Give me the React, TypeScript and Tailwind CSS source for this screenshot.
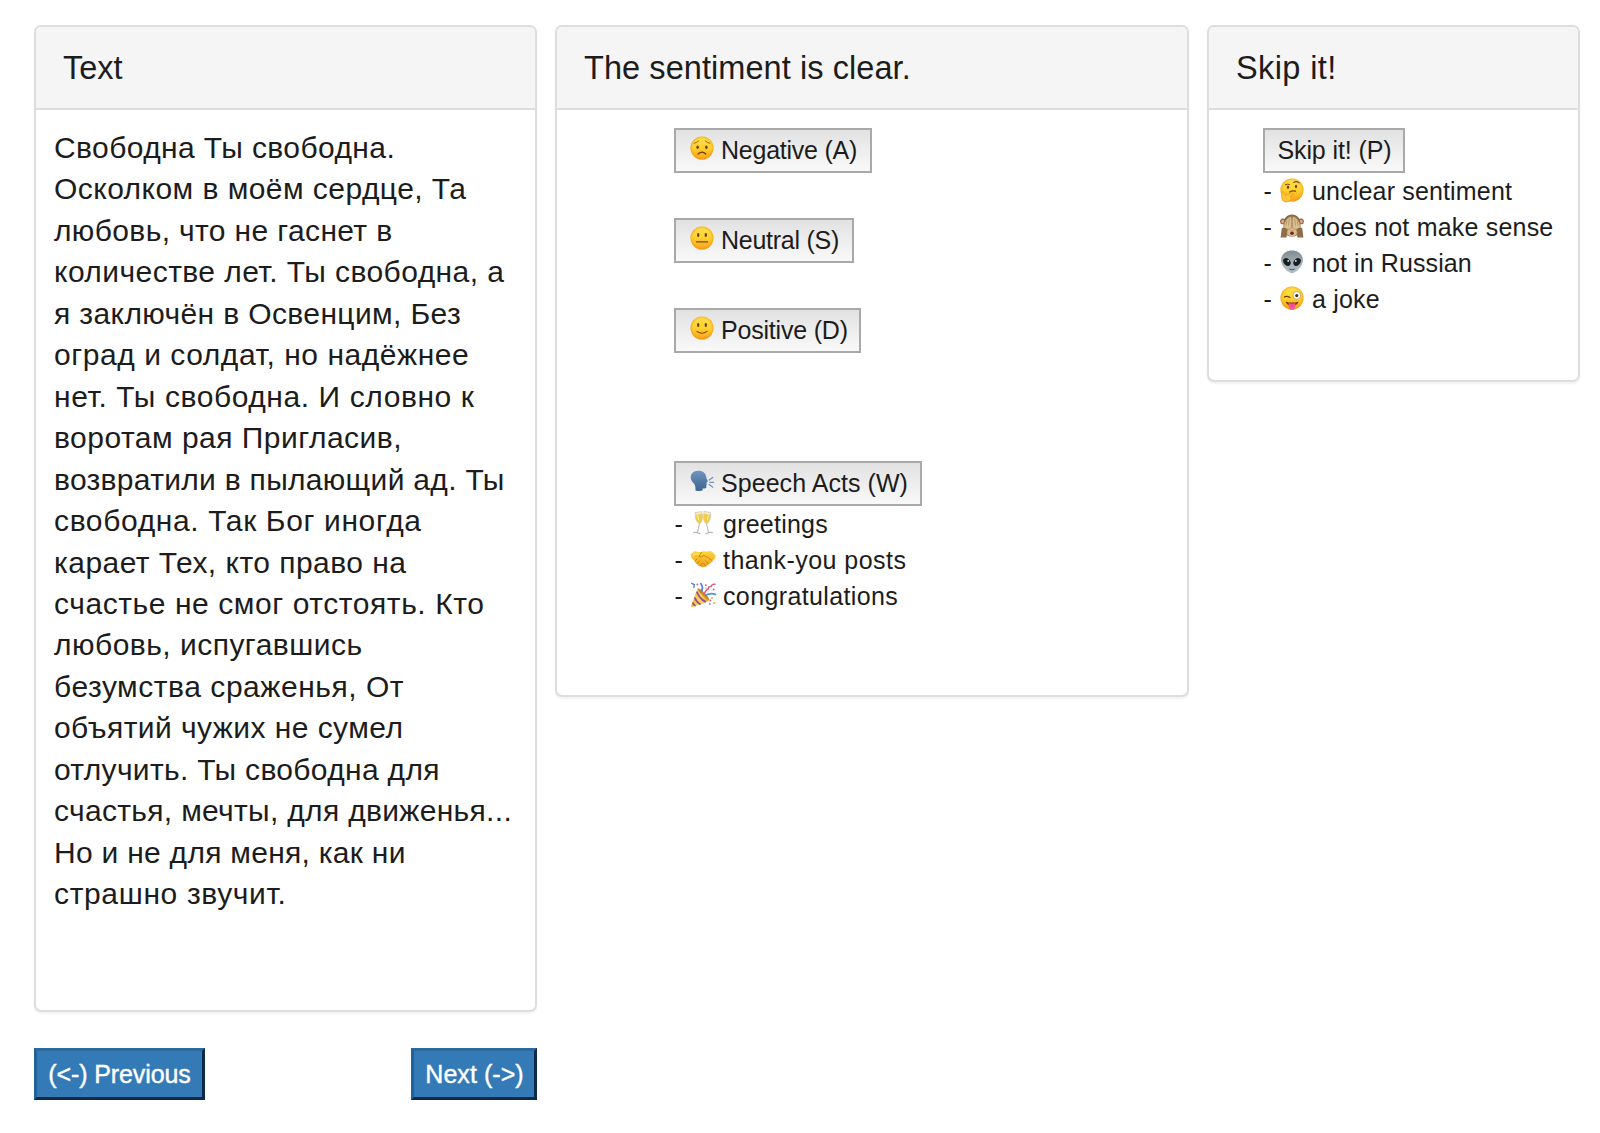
import type { ReactNode } from 'react';

/* ---------- emoji drawings ---------- */

function EmojiSvg({ children, className = '' }: { children: ReactNode; className?: string }) {
  return (
    <svg viewBox="0 0 24 24" className={`h-6 w-6 shrink-0 overflow-visible ${className}`} aria-hidden="true">
      {children}
    </svg>
  );
}

function Gradients() {
  return (
    <svg className="absolute h-0 w-0" aria-hidden="true">
      <defs>
        <linearGradient id="face" x1="0" y1="0" x2="0" y2="1">
          <stop offset="0" stopColor="#fee14c" />
          <stop offset="0.5" stopColor="#ffd02f" />
          <stop offset="1" stopColor="#f9a11b" />
        </linearGradient>
        <radialGradient id="rim" cx="0.5" cy="0.5" r="0.5">
          <stop offset="0.78" stopColor="#f59b12" stopOpacity="0" />
          <stop offset="1" stopColor="#ee8a0c" stopOpacity="0.55" />
        </radialGradient>
        <linearGradient id="speaker" x1="0" y1="0" x2="0" y2="1">
          <stop offset="0" stopColor="#6d95c0" />
          <stop offset="1" stopColor="#3e648f" />
        </linearGradient>
        <linearGradient id="alien" x1="0" y1="0" x2="0" y2="1">
          <stop offset="0" stopColor="#7e8b90" />
          <stop offset="0.5" stopColor="#9fadb3" />
          <stop offset="1" stopColor="#b4c3ca" />
        </linearGradient>
        <linearGradient id="hands" x1="0" y1="0" x2="0" y2="1">
          <stop offset="0" stopColor="#ffd53c" />
          <stop offset="1" stopColor="#f0a01a" />
        </linearGradient>
        <linearGradient id="cone" x1="0" y1="0" x2="1" y2="0">
          <stop offset="0" stopColor="#f3b62c" />
          <stop offset="0.5" stopColor="#ffd95a" />
          <stop offset="1" stopColor="#e99a1c" />
        </linearGradient>
      </defs>
    </svg>
  );
}

function Face() {
  return (
    <>
      <circle cx="12" cy="12" r="11.5" fill="url(#face)" />
      <circle cx="12" cy="12" r="11.5" fill="url(#rim)" />
    </>
  );
}

function Worried() {
  return (
    <EmojiSvg>
      <Face />
      <g fill="none" stroke="#8a5a12" strokeLinecap="round">
        <path d="M4.2 7.3 Q6.4 6.9 8.6 5" strokeWidth="0.9" />
        <path d="M19.8 7.3 Q17.6 6.9 15.4 5" strokeWidth="0.9" />
        <path d="M8.2 18 Q12 14.2 15.8 18" stroke="#6a3d0c" strokeWidth="1.3" />
      </g>
      <ellipse cx="7.6" cy="11.2" rx="1.25" ry="1.7" fill="#6a3d0c" />
      <ellipse cx="16.4" cy="11.2" rx="1.25" ry="1.7" fill="#6a3d0c" />
    </EmojiSvg>
  );
}

function NeutralFace() {
  return (
    <EmojiSvg>
      <Face />
      <ellipse cx="8.2" cy="9" rx="1.2" ry="1.9" fill="#6a3d0c" />
      <ellipse cx="15.8" cy="9" rx="1.2" ry="1.9" fill="#6a3d0c" />
      <path d="M6.4 15.8 H17.6" stroke="#7a4a0e" strokeWidth="1.2" strokeLinecap="round" />
    </EmojiSvg>
  );
}

function Smile() {
  return (
    <EmojiSvg>
      <Face />
      <ellipse cx="8.2" cy="9" rx="1.2" ry="1.9" fill="#6a3d0c" />
      <ellipse cx="15.8" cy="9" rx="1.2" ry="1.9" fill="#6a3d0c" />
      <path d="M7 15.4 Q12 19 17 15.4" fill="none" stroke="#7a4a0e" strokeWidth="1.1" strokeLinecap="round" />
    </EmojiSvg>
  );
}

function SpeakingHead() {
  return (
    <EmojiSvg>
      <path
        d="M8.4 1.8 C3.6 1.8 0.6 4.7 0.7 8.6 C0.8 11.3 2.3 12.9 4.2 14.9 C5.2 16 5.6 18 5.5 21.4 Q8.8 22.6 12.6 21.6 L12.7 19.3 Q15.4 19.8 16.2 18.8 C16.7 17.9 16 16.8 16.5 15.9 C17 15.1 16.5 14.3 16.6 13.4 L17.8 12.5 C18.2 11.9 16.5 9.9 16.2 8.3 C15.9 4.4 13 1.8 8.4 1.8 Z"
        fill="url(#speaker)"
      />
      <g stroke="#6f93b5" strokeWidth="1.2" strokeLinecap="round">
        <path d="M19.2 11 L22.8 8.4" />
        <path d="M19.8 13.3 H23.6" />
        <path d="M19.2 15.6 L22.8 18.2" />
      </g>
    </EmojiSvg>
  );
}

function Glasses() {
  return (
    <EmojiSvg>
      <g strokeLinejoin="round" strokeLinecap="round">
        <path d="M4.4 1.6 L10.8 0.4 C12 5.8 11.6 10.8 8.8 12.8 C5.4 12.2 3.8 7 4.4 1.6 Z" fill="#f1ebcd" stroke="#cdc8b0" strokeWidth="0.7" />
        <path d="M4.5 4 L11.3 2.8 C11.8 7.4 11.2 11 8.8 12.4 C6 11.8 4.4 8 4.5 4 Z" fill="#f0cb4c" />
        <path d="M13.2 0.4 L19.6 1.6 C20.2 7 18.6 12.2 15.2 12.8 C12.4 10.8 12 5.8 13.2 0.4 Z" fill="#f1ebcd" stroke="#cdc8b0" strokeWidth="0.7" />
        <path d="M12.7 2.8 L19.5 4 C19.6 8 18 11.8 15.2 12.4 C12.8 11 12.2 7.4 12.7 2.8 Z" fill="#f0cb4c" />
        <path d="M8.5 12.8 L6.4 21.6 M15.5 12.8 L17.6 21.6" stroke="#bdbcb6" strokeWidth="1.1" fill="none" />
        <path d="M2.6 21.6 Q6 20.6 9 22.8 M21.4 21.6 Q18 20.6 15 22.8" stroke="#b6b5ae" strokeWidth="1.2" fill="none" />
      </g>
      <path d="M6.7 4.6 L7.6 9 M17.3 4.6 L16.4 9" stroke="#fff5bd" strokeWidth="1" />
    </EmojiSvg>
  );
}

function Handshake() {
  return (
    <EmojiSvg>
      <path
        d="M-0.6 7.6 L3.6 4 Q7 5.2 10 4.9 Q13 3.6 15.6 4.6 L20.2 4 L24.8 8.6 Q24.4 12.2 21.4 13.8 Q20.4 16.6 17.4 17.6 Q15.6 20 12.8 20 Q10.4 20.8 9.2 19 Q6.6 19.2 6 17 Q3.8 16.6 3.8 14 Q0.2 11.8 -0.6 7.6 Z"
        fill="url(#hands)"
      />
      <g fill="none" stroke="#c87a12" strokeWidth="0.85" strokeLinecap="round">
        <path d="M11 5.2 Q8.4 7 7.8 9.6 Q9.8 11 12.8 8.4 Q17.4 10.2 21.2 13.8" />
        <path d="M4 13.8 L6 12 M6.2 16.6 L8.4 14 M9.2 18.8 L11 16.4" />
        <path d="M14.8 13.8 L17.6 17 M12.4 16 L14.6 19" />
      </g>
      <path d="M2 8 Q5 6.4 8 7" stroke="#ffe984" strokeWidth="1" fill="none" strokeLinecap="round" />
    </EmojiSvg>
  );
}

function Party() {
  return (
    <EmojiSvg>
      <path d="M6.6 5.2 L18.4 17 Q15.4 20 1 24 Q-0.4 24.2 0.2 22.6 Z" fill="url(#cone)" />
      <g stroke="#8c4ba6" strokeWidth="1.7" fill="none">
        <path d="M5.8 8.6 Q8.4 15.8 14.8 19" />
        <path d="M3.7 14.4 Q5.2 18.9 9.6 21.4" />
        <path d="M1.6 19.6 Q2.6 22 4.6 23" />
      </g>
      <ellipse cx="12.5" cy="11.1" rx="1.7" ry="8" transform="rotate(-45 12.5 11.1)" fill="#d08c24" />
      <g fill="none" strokeLinecap="round">
        <path d="M0.6 0.4 L3.4 1.6 L2.8 4.4" stroke="#4a7fe0" strokeWidth="1.4" />
        <path d="M10.2 8.6 Q12.8 4.8 9.8 0.6" stroke="#4a7fe0" strokeWidth="1.7" />
        <path d="M13 11 Q15.2 6.6 17.2 6 Q17.4 3 20.2 3.4 Q21 0.6 24.2 1.2" stroke="#e8577c" strokeWidth="1.4" />
        <path d="M14.4 12.4 Q19 9.4 24.4 11.4" stroke="#4f93e8" strokeWidth="1.8" />
      </g>
      <g fill="#e8577c">
        <circle cx="6.4" cy="1.6" r="1" />
        <circle cx="14.8" cy="2.2" r="0.9" />
        <circle cx="22.6" cy="6.4" r="1" />
        <circle cx="19.4" cy="17.4" r="0.9" />
      </g>
      <g fill="#f1a33a">
        <circle cx="15" cy="5.2" r="0.8" />
        <circle cx="21" cy="15" r="0.9" />
        <circle cx="23.2" cy="20" r="1" />
      </g>
      <circle cx="18.8" cy="21" r="0.9" fill="#b26bd0" />
    </EmojiSvg>
  );
}

function Thinking() {
  return (
    <EmojiSvg>
      <Face />
      <g fill="none" stroke="#7a4a0e" strokeLinecap="round">
        <path d="M5.2 6.8 Q7.2 5.6 9.6 6.4" strokeWidth="1" />
        <path d="M13.6 4.4 Q16.4 2.6 19 4.8" strokeWidth="1.1" />
        <path d="M9.6 14 Q12.4 12.4 15.6 13.2" strokeWidth="1.2" />
      </g>
      <ellipse cx="8" cy="9.2" rx="1.15" ry="1.6" fill="#6a3d0c" />
      <ellipse cx="16" cy="8.4" rx="1.15" ry="1.6" fill="#6a3d0c" />
      <path
        d="M1.7 14.2 Q3.4 12.6 4.3 15 L5 17.2 L11.6 15.2 Q13.6 15 13.2 16.6 Q12.6 17.4 10 18.3 Q12 19.2 11 21 Q9.8 24.2 5.8 24 Q2 23.6 1.6 19.6 Z"
        fill="#ffc532"
        stroke="#e9981c"
        strokeWidth="0.7"
      />
    </EmojiSvg>
  );
}

function Monkey() {
  return (
    <EmojiSvg>
      <circle cx="3" cy="7.4" r="2.9" fill="#8b6a45" />
      <circle cx="21" cy="7.4" r="2.9" fill="#8b6a45" />
      <circle cx="2.9" cy="7.6" r="1.8" fill="#e2a592" />
      <circle cx="21.1" cy="7.6" r="1.8" fill="#e2a592" />
      <path d="M12 0.5 C17 0.5 20.6 4.4 20.4 10 L19.6 18.4 Q16.4 22.6 12 22.6 Q7.6 22.6 4.4 18.4 L3.6 10 C3.4 4.4 7 0.5 12 0.5 Z" fill="#8b6a45" />
      <ellipse cx="12" cy="17.6" rx="5.6" ry="4.9" fill="#dcbd90" />
      <ellipse cx="12" cy="19.2" rx="1.9" ry="1.8" fill="#6e2f28" />
      <path d="M11.4 2.8 Q12.2 7 11.7 12.4 Q11.2 15.4 8.4 15.4 L4.6 15.6 Q3.2 13 4.4 9 Q5.8 5.8 8 4 Q10 2.2 11.4 2.8 Z" fill="#dcbf90" stroke="#a17e52" strokeWidth="0.6" />
      <path d="M12.6 2.8 Q11.8 7 12.3 12.4 Q12.8 15.4 15.6 15.4 L19.4 15.6 Q20.8 13 19.6 9 Q18.2 5.8 16 4 Q14 2.2 12.6 2.8 Z" fill="#dcbf90" stroke="#a17e52" strokeWidth="0.6" />
      <path d="M0.6 23.6 L1.8 14 Q4.4 12.4 7.6 15.2 L6.6 23.6 Z M23.4 23.6 L22.2 14 Q19.6 12.4 16.4 15.2 L17.4 23.6 Z" fill="#8f6e47" />
      <path d="M9.4 4.4 L8.4 11.6 M7 6.4 L5.8 11.4 M14.6 4.4 L15.6 11.6 M17 6.4 L18.2 11.4" stroke="#a9865a" strokeWidth="0.7" />
      <path d="M11.1 16.6 v0.6 M12.9 16.6 v0.6" stroke="#5c4024" strokeWidth="0.8" />
    </EmojiSvg>
  );
}

function Alien() {
  return (
    <EmojiSvg>
      <path d="M12 0.6 C18.6 0.6 23.2 5 22.9 10.6 C22.6 16.2 16 23.3 12 23.3 C8 23.3 1.4 16.2 1.1 10.6 C0.8 5 5.4 0.6 12 0.6 Z" fill="url(#alien)" />
      <ellipse cx="6.9" cy="12" rx="3.2" ry="4.3" transform="rotate(-38 6.9 12)" fill="#1b1e20" />
      <ellipse cx="17.1" cy="12" rx="3.2" ry="4.3" transform="rotate(38 17.1 12)" fill="#1b1e20" />
      <circle cx="8.2" cy="10.9" r="0.9" fill="#e9eef0" />
      <circle cx="15.8" cy="10.9" r="0.9" fill="#e9eef0" />
      <path d="M9.6 19.2 Q12 20.8 14.4 19.2" fill="none" stroke="#454e52" strokeWidth="1" strokeLinecap="round" />
    </EmojiSvg>
  );
}

function Joke() {
  return (
    <EmojiSvg>
      <Face />
      <path d="M4.4 11 Q7 9.6 10 11.4" fill="none" stroke="#6a3d0c" strokeWidth="1.2" strokeLinecap="round" />
      <circle cx="16.8" cy="9.4" r="3.9" fill="#ffffff" stroke="#a8792c" strokeWidth="0.6" />
      <circle cx="16.8" cy="9.6" r="1.6" fill="#4d2c0c" />
      <path d="M5.6 15.4 Q12 17.8 18.6 15.4 Q17.4 19.8 12 20 Q6.8 19.8 5.6 15.4 Z" fill="#7a3a12" />
      <path d="M8.6 17 Q12 18 15.4 17 L15.2 20.8 Q14.6 23.9 12 23.9 Q9.4 23.9 8.8 20.8 Z" fill="#f7559a" />
      <path d="M12 18.4 V21" stroke="#d43b7c" strokeWidth="0.8" />
    </EmojiSvg>
  );
}

/* ---------- building blocks ---------- */

function Card({ title, titleClass, className, children }: { title: string; titleClass: string; className: string; children: ReactNode }) {
  return (
    <section className={`shrink-0 overflow-hidden rounded-[7px] border-2 border-[#dddddd] bg-white shadow-[0_2px_2px_rgba(0,0,0,0.05)] ${className}`}>
      <h2 className={`flex h-[83px] items-center border-b-2 border-[#dddddd] bg-[#f5f5f5] pt-0.5 text-[32.5px] ${titleClass}`}>{title}</h2>
      {children}
    </section>
  );
}

function ChoiceButton({ icon, label, className }: { icon?: ReactNode; label: string; className: string }) {
  return (
    <button className={`flex h-[45px] items-center border-2 border-[#a9a9a9] bg-linear-to-b from-[#e2e2e2] to-[#f9f9f9] whitespace-nowrap ${className}`}>
      {icon && <span className="-mt-[6px] mr-[7px] ml-[14px]">{icon}</span>}
      {label}
    </button>
  );
}

function Hint({ icon, label, className }: { icon: ReactNode; label: string; className: string }) {
  return (
    <li className="flex h-9 items-center pt-0.5 whitespace-nowrap">
      <span className="w-[17px] pl-[0.5px]">-</span>
      <span className="-mt-[4px] mr-2">{icon}</span>
      <span className={className}>{label}</span>
    </li>
  );
}

const poem: [string, string][] = [
  ['Свободна Ты свободна.', 'tracking-[0.4px]'],
  ['Осколком в моём сердце, Та', 'tracking-[0.45px]'],
  ['любовь, что не гаснет в', 'tracking-[0.37px]'],
  ['количестве лет. Ты свободна, а', 'tracking-[0.44px]'],
  ['я заключён в Освенцим, Без', 'tracking-[0.38px]'],
  ['оград и солдат, но надёжнее', 'tracking-[0.55px]'],
  ['нет. Ты свободна. И словно к', 'tracking-[0.58px]'],
  ['воротам рая Пригласив,', 'tracking-[0.48px]'],
  ['возвратили в пылающий ад. Ты', 'tracking-[0.3px]'],
  ['свободна. Так Бог иногда', 'tracking-[0.63px]'],
  ['карает Тех, кто право на', 'tracking-[0.46px]'],
  ['счастье не смог отстоять. Кто', 'tracking-[0.57px]'],
  ['любовь, испугавшись', 'tracking-[0.48px]'],
  ['безумства сраженья, От', 'tracking-[0.54px]'],
  ['объятий чужих не сумел', 'tracking-[0.44px]'],
  ['отлучить. Ты свободна для', 'tracking-[0.32px]'],
  ['счастья, мечты, для движенья...', 'tracking-[0.32px]'],
  ['Но и не для меня, как ни', 'tracking-[0.28px]'],
  ['страшно звучит.', 'tracking-[0.64px]'],
];

export default function App() {
  return (
    <main className="flex h-[1133px] w-[1600px] items-start gap-[18px] overflow-hidden bg-white pt-[25px] pl-[34px] font-['Liberation_Sans',Arial,sans-serif] text-[25px] text-[#1c1c1c]">
      <Gradients />

      <div className="w-[503px] shrink-0">
        <Card title="Text" titleClass="pl-[27px]" className="h-[987px] w-full">
          <p className="pt-[17px] pl-[18px] text-[30px] leading-[41.45px]">
            {poem.map(([line, tracking]) => (
              <span key={line} className={`block whitespace-nowrap ${tracking}`}>
                {line}{' '}
              </span>
            ))}
          </p>
        </Card>
        <nav className="mt-9 flex justify-between text-white">
          <button className="h-[52px] w-[171px] border-[3px] border-t-[#2a6a9f] border-r-[#0e2a4b] border-b-[#0e2a4b] border-l-[#22629a] bg-[#337ab7] pt-0.5 tracking-[-0.1px] whitespace-nowrap [-webkit-text-stroke:0.4px_white]">
            {'(<-) Previous'}
          </button>
          <button className="h-[52px] w-[126px] border-[3px] border-t-[#2a6a9f] border-r-[#0e2a4b] border-b-[#0e2a4b] border-l-[#22629a] bg-[#337ab7] pt-0.5 pl-px tracking-[0.05px] whitespace-nowrap [-webkit-text-stroke:0.4px_white]">
            {'Next (->)'}
          </button>
        </nav>
      </div>

      <Card title="The sentiment is clear." titleClass="pl-[27px] tracking-[0.07px]" className="h-[672px] w-[634px]">
        <div className="flex flex-col items-start pt-[18px] pl-[117px]">
          <div className="flex flex-col items-start gap-[45px]">
            <ChoiceButton icon={<Worried />} label="Negative (A)" className="w-[198px] tracking-[-0.24px]" />
            <ChoiceButton icon={<NeutralFace />} label="Neutral (S)" className="w-[180px] tracking-[-0.26px]" />
            <ChoiceButton icon={<Smile />} label="Positive (D)" className="w-[187px] tracking-[-0.2px]" />
          </div>
          <div className="mt-[108px]">
            <ChoiceButton icon={<SpeakingHead />} label="Speech Acts (W)" className="w-[248px] tracking-[0.05px]" />
            <ul>
              <Hint icon={<Glasses />} label="greetings" className="tracking-[0.24px]" />
              <Hint icon={<Handshake />} label="thank-you posts" className="tracking-[0.46px]" />
              <Hint icon={<Party />} label="congratulations" className="tracking-[0.37px]" />
            </ul>
          </div>
        </div>
      </Card>

      <Card title="Skip it!" titleClass="pl-[27px] tracking-[0.4px]" className="h-[357px] w-[373px]">
        <div className="pt-[18px] pl-[54px]">
          <ChoiceButton label="Skip it! (P)" className="w-[142px] justify-center pl-px tracking-[-0.1px]" />
          <ul>
            <Hint icon={<Thinking />} label="unclear sentiment" className="tracking-[0.16px]" />
            <Hint icon={<Monkey />} label="does not make sense" className="tracking-[0.2px]" />
            <Hint icon={<Alien />} label="not in Russian" className="tracking-[0.1px]" />
            <Hint icon={<Joke />} label="a joke" className="tracking-[0.2px]" />
          </ul>
        </div>
      </Card>
    </main>
  );
}
